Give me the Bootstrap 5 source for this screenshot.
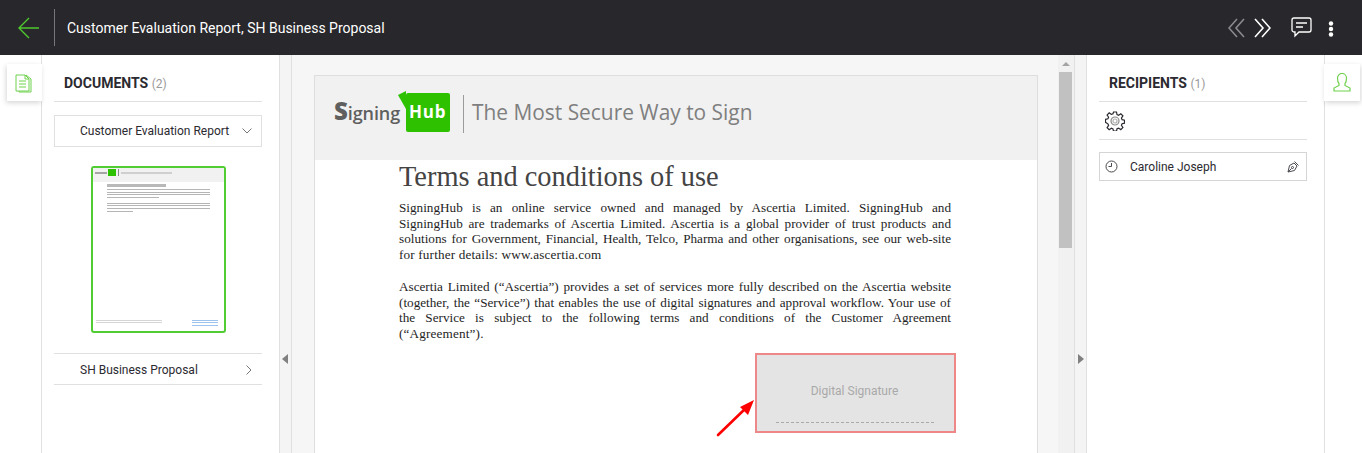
<!DOCTYPE html>
<html lang="en">
<head>
    <meta charset="UTF-8">
    <meta name="viewport" content="width=device-width, initial-scale=1.0">
    <title>Customer Evaluation Report</title>
    <link href="https://cdn.jsdelivr.net/npm/bootstrap@5.3.0/dist/css/bootstrap.min.css" rel="stylesheet">
    <style>
        html, body { height: 453px; overflow: hidden; }
        body { font-family: Roboto, "Liberation Sans", sans-serif; font-size: 12px; color: #2b2a30; background: #fff; }
        .top-bar { height: 55px; background: #28272b; color: #fff; }
        .back-btn { width: 55px; height: 37px; border-right: 1px solid #77767a; padding-left: 18px; }
        .top-title { font-size: 14px; padding: 1px 0 0 12px; }
        .top-tools { padding-right: 28px; }
        .tool-next { margin-left: 9px; }
        .tool-chat { margin-left: 20px; }
        .tool-more { margin-left: 16px; margin-top: 2px; }
        .work-area { height: 398px; }
        .side-rail { width: 42px; flex: none; position: relative; border-right: 1px solid #e0e0e0; }
        .side-rail.rail-right { width: 38px; border-right: 0; border-left: 1px solid #e0e0e0; }
        .rail-tab { position: absolute; top: 9px; height: 37px; background: #fff; box-shadow: -1px 2px 5px rgba(0,0,0,.16); }
        .rail-left .rail-tab { left: 7px; width: 35px; padding: 10px 0 0 8px; }
        .rail-right .rail-tab { left: -1px; width: 36px; padding: 9px 0 0 9px; box-shadow: 1px 2px 5px rgba(0,0,0,.16); }
        .doc-panel { width: 237px; flex: none; }
        .panel-head { height: 47px; margin: 0 17px 0 12px; border-bottom: 1px solid #e0e0e0; padding: 20px 0 0 10px; font-size: 14px; font-weight: 700; line-height: 17px; }
        .panel-head span { font-size: 12px; font-weight: 400; color: #9a9a9a; }
        .doc-open { height: 32px; margin: 13px 17px 0 12px; border: 1px solid #e0e0e0; padding-left: 25px; padding-right: 9px; white-space: nowrap; }
        .thumb-wrap { height: 168px; margin-top: 19px; }
        .thumb-page { width: 135px; height: 167px; border: 2px solid #52cc33; border-radius: 3px; background: #fff; margin-left: 49px; overflow: hidden; }
        .thumb-head { height: 14px; background: #f1f1f1; padding: 1px 0 0 2px; filter: blur(.4px); }
        .thumb-word { width: 12px; height: 2px; background: #a5a5a5; margin-top: 3px; }
        .thumb-logo { width: 8px; height: 7px; background: #2dc100; margin-left: 1px; }
        .thumb-sep { width: 1px; height: 7px; background: #888; margin: 0 2px 0 2px; }
        .thumb-tag { width: 51px; height: 2px; background: #cfcfcf; margin-top: 3px; }
        .thumb-body { padding: 2px 14px 0 14px; filter: blur(.4px); }
        .thumb-title { width: 59px; height: 3px; background: #b8b8b8; margin-bottom: 2px; }
        .thumb-line { height: 1px; background: #b5b5b5; margin-top: 1.600px; }
        .thumb-line.thumb-gap { margin-top: 5px; }
        .thumb-foot { padding: 0 6px 5px 3px; filter: blur(.4px); }
        .thumb-foot-left { width: 66px; }
        .thumb-foot-left .thumb-line { background: #d5d5d5; }
        .thumb-foot-right { width: 26px; }
        .thumb-foot-right .thumb-line { background: #9cc3ee; }
        .doc-closed { height: 32px; margin: 19px 17px 0 12px; border-top: 1px solid #e0e0e0; border-bottom: 1px solid #e0e0e0; padding: 1px 10px 0 26px; }
        .gutter { width: 12px; flex: none; background: #f4f4f4; border-left: 1px solid #e0e0e0; }
        .gutter.gutter-right { border-right: 1px solid #e0e0e0; width: 13px; }
        .handle { width: 0; height: 0; border-top: 5px solid transparent; border-bottom: 5px solid transparent; margin-top: 299px; }
        .handle-left { border-right: 6px solid #808080; margin-left: 2px; }
        .handle-right { border-left: 6px solid #808080; margin-left: 3px; }
        .viewer { flex: 1 1 auto; min-width: 0; background: #f6f6f6; border-left: 1px solid #e0e0e0; }
        .viewer-scroll { flex: 1 1 auto; min-width: 0; padding: 20px 20px 0 22px; overflow: hidden; }
        .pdf-page { width: 724px; height: 400px; background: #fff; border: 1px solid #dedede; position: relative; }
        .pdf-head { height: 84px; background: #f1f1f1; padding: 17px 0 0 19px; }
        .logo-word { font-family: "Open Sans", sans-serif; font-size: 18px; font-weight: 600; color: #5f5f5f; letter-spacing: -.1px; margin-top: 6px; width: 69px; white-space: nowrap; }
        .logo-word b { font-size: 24px; line-height: 24px; }
        .logo-box { width: 44px; height: 39px; background: #2dc100; color: #fff; font-family: "Open Sans", sans-serif; font-weight: 700; font-size: 17px; border-radius: 2px; padding: 9px 0 0 3px; line-height: 20px; letter-spacing: .8px; margin-left: 3px; position: relative; }
        .logo-box::before { content: ""; position: absolute; left: -8px; top: -2px; border-right: 8px solid #2dc100; border-top: 4px solid transparent; border-bottom: 14px solid transparent; }
        .logo-sep { width: 1px; height: 38px; background: #9b9b9b; margin: 2px 8px 0 13px; }
        .logo-tag { font-family: "Open Sans", sans-serif; font-size: 20.900px; color: #7f7f7f; line-height: 34px; margin-top: 2px; white-space: nowrap; }
        .pdf-body { padding: 0 86px 0 84px; font-family: "Liberation Serif", serif; color: #1e1e1e; font-size: 13.200px; line-height: 15.700px; }
        .pdf-title { font-size: 28.400px; line-height: 32px; color: #444; padding-top: 1px; margin-bottom: 7px; }
        .pdf-para { margin-bottom: 16px; }
        .pdf-line { display: block; text-align: justify; text-align-last: justify; }
        .pdf-line.line-end { text-align-last: left; letter-spacing: .16px; }
        .sig-box { position: absolute; left: 440px; top: 277px; width: 201px; height: 80px; background: #e4e4e4; border: 2px solid #ee8888; font-size: 12px; color: #a9a9a9; text-align: center; padding: 27px 2px 0 0; }
        .sig-dash { position: absolute; left: 19px; right: 20px; bottom: 8px; border-top: 1px dashed #a9a9a9; }
        .sig-arrow { position: absolute; left: 401px; top: 322px; }
        .scroll-track { width: 16px; flex: none; background: #f1f1f1; }
        .scroll-up { height: 16px; padding: 7px 0 0 3px; }
        .scroll-up i { display: block; width: 0; height: 0; border-left: 4px solid transparent; border-right: 4px solid transparent; border-bottom: 4px solid #a3a3a3; margin-left: 1px; }
        .scroll-thumb { height: 176px; background: #c1c1c1; margin: 1px 2px 0 1px; }
        .tool-row { height: 38px; margin: 0 17px 0 12px; border-bottom: 1px solid #e0e0e0; padding: 9px 0 0 6px; }
        .recipient { height: 29px; margin: 12px 17px 0 12px; border: 1px solid #d5d5d5; padding: 0 6px 0 5px; }
        .recipient-name { margin-left: 12px; padding-top: 1px; }
    </style>
</head>
<body>
    <div class="top-bar d-flex align-items-center">
        <div class="back-btn d-flex align-items-center">
            <svg width="22" height="22" viewBox="0 0 22 22" fill="none" stroke="#4fc72e" stroke-width="1.400"><path d="M21 11H1M11 1 1 11l10 10"/></svg>
        </div>
        <div class="top-title flex-grow-1">Customer Evaluation Report, SH Business Proposal</div>
        <div class="top-tools d-flex align-items-center">
            <svg width="17" height="20" viewBox="0 0 17 20" fill="none" stroke="#8b8a8e" stroke-width="1.600"><path d="M9 1 1 10l8 9M16 1l-8 9 8 9"/></svg>
            <svg class="tool-next" width="17" height="20" viewBox="0 0 17 20" fill="none" stroke="#fff" stroke-width="1.600"><path d="M1 1l8 9-8 9M8 1l8 9-8 9"/></svg>
            <svg class="tool-chat" width="21" height="21" viewBox="0 0 21 21" fill="none" stroke="#fff" stroke-width="1.300"><path d="M3 1h15a2 2 0 0 1 2 2v10a2 2 0 0 1-2 2H8l-4 4v-4H3a2 2 0 0 1-2-2V3a2 2 0 0 1 2-2zM5 6h11M5 10h7"/></svg>
            <svg class="tool-more" width="6" height="16" viewBox="0 0 6 16" fill="#fff"><circle cx="3" cy="2.500" r="2.200"/><circle cx="3" cy="8" r="2.200"/><circle cx="3" cy="13.500" r="2.200"/></svg>
        </div>
    </div>

    <div class="work-area d-flex">
        <div class="side-rail rail-left">
            <div class="rail-tab">
                <svg width="18" height="19" viewBox="0 0 18 19" fill="none" stroke="#6fd14f" stroke-width="1"><path d="M1 1h9l4 4v12H1zM10 1v4h4M11 1l5 4v13H4v-1"/><path d="M4 7h7M4 10h7M4 13h7" stroke-width="1.200"/></svg>
            </div>
        </div>
        <div class="doc-panel">
            <div class="panel-head">DOCUMENTS <span>(2)</span></div>
            <div class="doc-open d-flex align-items-center justify-content-between">
                <span>Customer Evaluation Report</span>
                <svg width="10" height="6" viewBox="0 0 10 6" fill="none" stroke="#77767a"><path d="M.5.5 5 5 9.500.5"/></svg>
            </div>
            <div class="thumb-wrap">
                <div class="thumb-page d-flex flex-column">
                    <div class="thumb-head d-flex align-items-start">
                        <div class="thumb-word"></div>
                        <div class="thumb-logo"></div>
                        <div class="thumb-sep"></div>
                        <div class="thumb-tag"></div>
                    </div>
                    <div class="thumb-body">
                        <div class="thumb-title"></div>
                        <div class="thumb-line"></div>
                        <div class="thumb-line"></div>
                        <div class="thumb-line"></div>
                        <div class="thumb-line w-50"></div>
                        <div class="thumb-line thumb-gap"></div>
                        <div class="thumb-line"></div>
                        <div class="thumb-line"></div>
                        <div class="thumb-line w-25"></div>
                    </div>
                    <div class="thumb-foot d-flex justify-content-between mt-auto">
                        <div class="thumb-foot-left">
                            <div class="thumb-line"></div>
                            <div class="thumb-line"></div>
                        </div>
                        <div class="thumb-foot-right">
                            <div class="thumb-line"></div>
                            <div class="thumb-line"></div>
                            <div class="thumb-line"></div>
                        </div>
                    </div>
                </div>
            </div>
            <div class="doc-closed d-flex align-items-center justify-content-between">
                <span>SH Business Proposal</span>
                <svg width="6" height="10" viewBox="0 0 6 10" fill="none" stroke="#77767a"><path d="M.5.500 5 5 .5 9.500"/></svg>
            </div>
        </div>
        <div class="gutter"><div class="handle handle-left"></div></div>
        <div class="viewer d-flex">
            <div class="viewer-scroll">
                <div class="pdf-page">
                    <div class="pdf-head d-flex align-items-start">
                        <span class="logo-word"><b>S</b>igning</span>
                        <div class="logo-box">Hub</div>
                        <div class="logo-sep"></div>
                        <div class="logo-tag">The Most Secure Way to Sign</div>
                    </div>
                    <div class="pdf-body">
                        <div class="pdf-title">Terms and conditions of use</div>
                        <div class="pdf-para">
                            <span class="pdf-line">SigningHub is an online service owned and managed by Ascertia Limited. SigningHub and</span>
                            <span class="pdf-line">SigningHub are trademarks of Ascertia Limited. Ascertia is a global provider of trust products and</span>
                            <span class="pdf-line">solutions for Government, Financial, Health, Telco, Pharma and other organisations, see our web-site</span>
                            <span class="pdf-line line-end">for further details: www.ascertia.com</span>
                        </div>
                        <div class="pdf-para">
                            <span class="pdf-line">Ascertia Limited (“Ascertia”) provides a set of services more fully described on the Ascertia website</span>
                            <span class="pdf-line">(together, the “Service”) that enables the use of digital signatures and approval workflow. Your use of</span>
                            <span class="pdf-line">the Service is subject to the following terms and conditions of the Customer Agreement</span>
                            <span class="pdf-line line-end">(“Agreement”).</span>
                        </div>
                    </div>
                    <div class="sig-box">Digital Signature<div class="sig-dash"></div></div>
                    <svg class="sig-arrow" width="40" height="40" viewBox="0 0 40 40"><path d="M2 37 30 10" stroke="#f00" stroke-width="2.600" stroke-linecap="round"/><path d="M38 2 32 17 24 9z" fill="#f00"/></svg>
                </div>
            </div>
            <div class="scroll-track">
                <div class="scroll-up"><i></i></div>
                <div class="scroll-thumb"></div>
            </div>
        </div>
        <div class="gutter gutter-right"><div class="handle handle-right"></div></div>
        <div class="doc-panel">
            <div class="panel-head">RECIPIENTS <span>(1)</span></div>
            <div class="tool-row">
                <svg width="20" height="20" viewBox="0 0 20 20" fill="none" stroke="#2b2a30" stroke-width="1.200"><path d="M8.500 1h3l.5 2.600 1.600.7 2.200-1.500 2.100 2.100-1.500 2.200.7 1.600 2.400.5v3l-2.400.5-.7 1.600 1.500 2.200-2.100 2.100-2.200-1.500-1.600.7-.5 2.400h-3L8 17.900l-1.600-.7-2.200 1.500-2.100-2.100 1.500-2.200-.7-1.600L.5 11.300v-3l2.400-.5.7-1.600-1.500-2.200 2.100-2.100 2.200 1.500 1.600-.7z"/><circle cx="10" cy="10" r="4" stroke="#8a8a8a"/><circle cx="10" cy="10" r="2" stroke="#b0b0b0"/></svg>
            </div>
            <div class="recipient d-flex align-items-center">
                <svg width="13" height="13" viewBox="0 0 13 13" fill="none" stroke="#4a4a50"><circle cx="6.500" cy="6.500" r="5.500"/><path d="M6.500 3v3.500H3.500"/></svg>
                <span class="recipient-name flex-grow-1">Caroline Joseph</span>
                <svg width="13" height="13" viewBox="0 0 13 13" fill="none" stroke="#4a4a50"><path d="M1 12l1.500-6.500L7 3l3 3-2.500 4.500zM1 12l3.500-3.500M7.500 1.500l4 4"/><circle cx="5.500" cy="7.500" r="1"/></svg>
            </div>
        </div>
        <div class="side-rail rail-right">
            <div class="rail-tab">
                <svg width="18" height="19" viewBox="0 0 18 19" fill="none" stroke="#6fd14f" stroke-width="1.200"><path d="M1 18v-3l5-2.500V10.500C4.500 9 4.500 7 4.500 5a4.500 4.500 0 0 1 9 0c0 2 0 4-1.500 5.500v2L17 15v3z"/></svg>
            </div>
        </div>
    </div>
</body>
</html>
